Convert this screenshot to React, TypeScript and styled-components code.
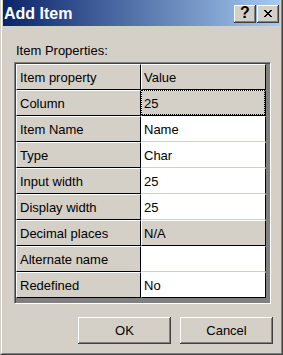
import { Fragment } from "react"
import styled, { createGlobalStyle } from "styled-components"

const GlobalStyle = createGlobalStyle`
html, body {
  margin: 0;
  padding: 0;
  background: #d4d0c8;
}
body {
  font-family: "Liberation Sans", Arial, sans-serif;
  font-size: 13px;
  color: #000;
}
`

type Row = {
    name: string
    value: string
    tone: "gray" | "white"
    focus?: boolean
}

const rows: Row[] = [
    { name: "Column", value: "25", tone: "gray", focus: true },
    { name: "Item Name", value: "Name", tone: "white" },
    { name: "Type", value: "Char", tone: "white" },
    { name: "Input width", value: "25", tone: "white" },
    { name: "Display width", value: "25", tone: "white" },
    { name: "Decimal places", value: "N/A", tone: "gray" },
    { name: "Alternate name", value: "", tone: "white" },
    { name: "Redefined", value: "No", tone: "white" },
]

const App = () => {
    return (
        <>
            <GlobalStyle />
            <Window>
                <Frame>
                    <TitleBar>
                        <Title>Add Item</Title>
                        <Space />
                        <CaptionButton aria-label="Help">
                            <HelpGlyph>?</HelpGlyph>
                        </CaptionButton>
                        <CaptionButton aria-label="Close">
                            <svg width="8" height="7" viewBox="0 0 8 7">
                                <path d="M0 0h2v1h1v1h2V1h1V0h2v1H7v1H6v1H5v1h1v1h1v1h1v1H6V6H5V5H3v1H2v1H0V6h1V5h1V4h1V3H2V2H1V1H0z" fill="#000" />
                            </svg>
                        </CaptionButton>
                    </TitleBar>

                    <Body>
                        <Label>Item Properties:</Label>

                        <GridBox>
                            <Grid>
                                <NameCell>Item property</NameCell>
                                <ValueCell tone="gray">Value</ValueCell>
                                {rows.map((r, i) => (
                                    <Fragment key={r.name}>
                                        <NameCell>{r.name}</NameCell>
                                        <ValueCell
                                            tone={r.tone}
                                            $focus={r.focus}
                                            $last={i === rows.length - 1}
                                        >
                                            {r.value}
                                        </ValueCell>
                                    </Fragment>
                                ))}
                            </Grid>
                        </GridBox>

                        <ButtonHolder>
                            <Button>OK</Button>
                            <Button>Cancel</Button>
                        </ButtonHolder>
                    </Body>
                </Frame>
            </Window>
        </>
    )
}

export default App

const Window = styled.div`
width: 283px;
height: 355px;
box-sizing: border-box;
background: #d4d0c8;
border-left: 1px solid #d4d0c8;
border-right: 1px solid #404040;
border-bottom: 1px solid #404040;
display: flex;
`

const Frame = styled.div`
flex: 1;
display: flex;
flex-direction: column;
border-left: 1px solid #fff;
border-right: 1px solid #808080;
border-bottom: 1px solid #808080;
padding: 0 1px 1px 1px;
`

const TitleBar = styled.div`
height: 26px;
display: flex;
align-items: center;
gap: 1px;
padding: 1px 1px 0 1px;
box-sizing: border-box;
background: linear-gradient(to right, #0a246a, #a6caf0);
`

const Title = styled.div`
color: #fff;
font-weight: bold;
font-size: 16px;
line-height: 18px;
`

const Space = styled.div`
flex: 1;
`

const CaptionButton = styled.div`
width: 22px;
height: 18px;
box-sizing: border-box;
background: #d4d0c8;
box-shadow: inset -1px -1px #404040, inset 1px 1px #fff, inset -2px -2px #808080;
display: flex;
align-items: center;
justify-content: center;
padding-bottom: 1px;
`

const HelpGlyph = styled.span`
font-weight: bold;
font-size: 16px;
line-height: 16px;
`

const Body = styled.div`
flex: 1;
display: flex;
flex-direction: column;
padding: 17px 0 0 11px;
`

const Label = styled.div`
padding-left: 2px;
line-height: 15px;
margin-bottom: 4px;
`

const GridBox = styled.div`
width: 257px;
box-sizing: border-box;
background: #808080;
border-top: 1px solid #808080;
border-left: 1px solid #808080;
border-right: 1px solid #fff;
border-bottom: 1px solid #fff;
box-shadow: inset 1px 1px #404040;
padding: 1px 4px 5px 1px;
`

const Grid = styled.div`
display: grid;
grid-template-columns: 125px 125px;
grid-auto-rows: 26px;
`

const NameCell = styled.div`
box-sizing: border-box;
background: #d4d0c8;
border-top: 1px solid #fff;
border-left: 1px solid #fff;
border-right: 1px solid #000;
border-bottom: 1px solid #000;
padding: 5px 0 0 3px;
line-height: 15px;
white-space: nowrap;
`

const ValueCell = styled.div<{ tone: "gray" | "white"; $focus?: boolean; $last?: boolean }>`
position: relative;
box-sizing: border-box;
background: ${p => (p.tone === "gray" ? "#d4d0c8" : "#fff")};
border-top: 1px solid #fff;
border-left: 1px solid #fff;
border-right: 1px solid #000;
border-bottom: 1px solid ${p => (p.tone === "gray" || p.$last ? "#000" : "#d4d0c8")};
padding: 5px 0 0 2px;
line-height: 15px;
white-space: nowrap;

${p => p.$focus && `
&::after {
  content: "";
  position: absolute;
  top: -1px;
  left: -1px;
  right: 0;
  bottom: 0;
  border: 1px dotted #000;
}
`}
`

const ButtonHolder = styled.div`
display: flex;
justify-content: flex-end;
gap: 9px;
margin-top: 13px;
padding-right: 7px;
`

const Button = styled.div`
width: 93px;
height: 27px;
box-sizing: border-box;
background: #d4d0c8;
box-shadow: inset -1px -1px #404040, inset 1px 1px #fff, inset -2px -2px #808080;
display: flex;
align-items: center;
justify-content: center;
padding-bottom: 1px;
`
